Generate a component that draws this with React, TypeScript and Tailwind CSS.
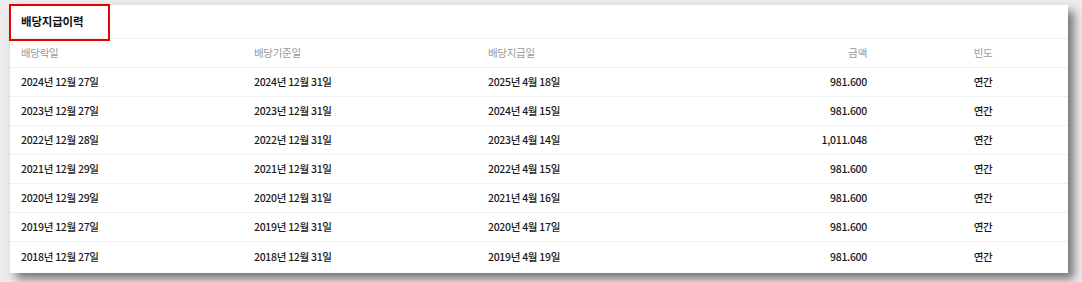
import React from 'react';

interface DividendRow {
  exDate: string;
  recordDate: string;
  payDate: string;
  amount: string;
  freq: string;
}

const rows: DividendRow[] = [
  { exDate: '2024년 12월 27일', recordDate: '2024년 12월 31일', payDate: '2025년 4월 18일', amount: '981.600', freq: '연간' },
  { exDate: '2023년 12월 27일', recordDate: '2023년 12월 31일', payDate: '2024년 4월 15일', amount: '981.600', freq: '연간' },
  { exDate: '2022년 12월 28일', recordDate: '2022년 12월 31일', payDate: '2023년 4월 14일', amount: '1,011.048', freq: '연간' },
  { exDate: '2021년 12월 29일', recordDate: '2021년 12월 31일', payDate: '2022년 4월 15일', amount: '981.600', freq: '연간' },
  { exDate: '2020년 12월 29일', recordDate: '2020년 12월 31일', payDate: '2021년 4월 16일', amount: '981.600', freq: '연간' },
  { exDate: '2019년 12월 27일', recordDate: '2019년 12월 31일', payDate: '2020년 4월 17일', amount: '981.600', freq: '연간' },
  { exDate: '2018년 12월 27일', recordDate: '2018년 12월 31일', payDate: '2019년 4월 19일', amount: '981.600', freq: '연간' },
];

const cols = 'grid grid-cols-[233px_234px_240px_139px_1fr] items-center px-[11px]';

const App = () => {
  return (
    <div
      className="h-[282px] w-[1082px] bg-[#ececec] pl-[10px] pt-[5px]"
      style={{ fontFamily: '"Noto Sans CJK KR", "Noto Sans", sans-serif' }}
    >
      <div className="relative h-[268px] w-[1058px] bg-white shadow-[6px_6px_9px_rgba(0,0,0,0.5)]">
        <div className="flex h-[34px] items-center border-b border-[#f1f1f1] px-[11px]">
          <span className="text-[11.5px] font-bold tracking-[-0.2px] text-[#111]">배당지급이력</span>
        </div>
        <div className="absolute -left-px -top-px h-[37px] w-[101px] border-2 border-[#e60000]" />

        <div className={`${cols} h-[29px] border-b border-[#f1f1f1] text-[10.5px] tracking-[-0.3px] text-[#999]`}>
          <span>배당락일</span>
          <span>배당기준일</span>
          <span>배당지급일</span>
          <span className="text-right">금액</span>
          <span className="pl-[103px]">
            <span className="inline-block w-[26px] text-center">빈도</span>
          </span>
        </div>

        {rows.map((row, i) => (
          <div
            key={row.exDate}
            className={`${cols} h-[29px] text-[10.5px] font-medium tracking-[-0.3px] text-[#1a1a1a] ${i < rows.length - 1 ? 'border-b border-[#f1f1f1]' : ''}`}
          >
            <span>{row.exDate}</span>
            <span>{row.recordDate}</span>
            <span>{row.payDate}</span>
            <span className="text-right">{row.amount}</span>
            <span className="pl-[103px]">
              <span className="inline-block w-[26px] text-center">{row.freq}</span>
            </span>
          </div>
        ))}
      </div>
    </div>
  );
};

export default App;
